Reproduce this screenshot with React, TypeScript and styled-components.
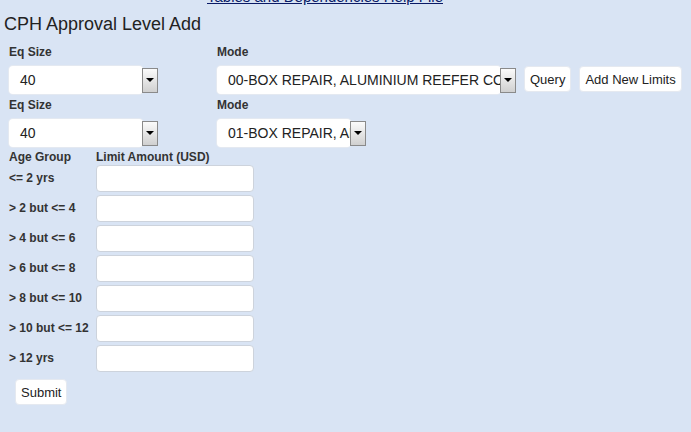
import React from 'react';
import styled, { createGlobalStyle } from 'styled-components';

const GlobalStyle = createGlobalStyle`
  html, body {
    margin: 0;
    padding: 0;
    background: #d9e4f4;
  }
  body {
    font-family: "Liberation Sans", Arial, sans-serif;
    color: #222;
  }
`;

const Page = styled.div`
  width: 691px;
  height: 432px;
  overflow: hidden;
  padding-left: 4px;
  box-sizing: border-box;
`;

const HelpLink = styled.a`
  display: block;
  margin: -12px 0 0 203px;
  font-size: 15px;
  line-height: 17px;
  color: #0a1a66;
  text-decoration: underline;
  width: max-content;
`;

const Title = styled.h1`
  margin: 8px 0 0;
  font-size: 18px;
  font-weight: normal;
  line-height: 22px;
  color: #222;
`;

const Fields = styled.div<{ $top: number }>`
  display: flex;
  align-items: flex-end;
  margin: ${({ $top }) => $top}px 0 0 5px;
  gap: 9px;
`;

const Field = styled.div<{ $width: number }>`
  display: flex;
  flex-direction: column;
  flex-shrink: 0;
  width: ${({ $width }) => $width}px;
  gap: 6px;
`;

const Label = styled.div`
  font-size: 12px;
  font-weight: bold;
  line-height: 16px;
  color: #333;
  white-space: nowrap;
`;

const SelectBox = styled.div<{ $width: number }>`
  width: ${({ $width }) => $width}px;
  height: 28px;
  display: flex;
  align-items: center;
`;

const SelectField = styled.div`
  flex: 1;
  min-width: 0;
  height: 28px;
  background: #fff;
  border-radius: 4px;
  box-shadow: 0 0 0 1px #e4e9f1;
  font-size: 14px;
  line-height: 28px;
  padding-left: 11px;
  padding-right: 3px;
  overflow: hidden;
  white-space: nowrap;
  color: #222;
`;

const Arrow = styled.div`
  flex-shrink: 0;
  width: 14px;
  height: 23px;
  border: 1px solid #8a8a8a;
  background: linear-gradient(#fbfbfb, #d0d0d0);
  display: flex;
  align-items: center;
  justify-content: center;
  margin-left: -1px;
  &::after {
    content: "";
    border-left: 4px solid transparent;
    border-right: 4px solid transparent;
    border-top: 4px solid #000;
  }
`;

const Button = styled.button`
  height: 26px;
  padding: 0 5px;
  border: 1px solid #e5e9f0;
  border-radius: 4px;
  background: #fff;
  font-family: "Liberation Sans", Arial, sans-serif;
  font-size: 13px;
  color: #222;
  white-space: nowrap;
  cursor: pointer;
`;

const Actions = styled.div`
  display: flex;
  flex-shrink: 0;
  gap: 8px;
  margin-left: -1px;
  padding-bottom: 2px;
`;

const HeaderLine = styled.div`
  display: flex;
  margin: 2px 0 0 5px;
  height: 15px;
  & > :first-child {
    width: 87px;
  }
`;

const Limits = styled.div`
  display: grid;
  grid-template-columns: 87px 158px;
  grid-auto-rows: 30px;
  margin: 1px 0 0 5px;
  align-items: start;
`;

const RowLabel = styled(Label)`
  line-height: 27px;
`;

const AmountInput = styled.input`
  width: 158px;
  height: 27px;
  box-sizing: border-box;
  border: 1px solid #cdd3dc;
  border-radius: 4px;
  background: #fff;
`;

const SubmitRow = styled.div`
  margin: 4px 0 0 11px;
`;

const rows = ['<= 2 yrs', '> 2 but <= 4', '> 4 but <= 6', '> 6 but <= 8', '> 8 but <= 10', '> 10 but <= 12', '> 12 yrs'];

function Select({ value, width }: { value: string; width: number }) {
  return (
    <SelectBox $width={width}>
      <SelectField>{value}</SelectField>
      <Arrow />
    </SelectBox>
  );
}

export default function App() {
  return (
    <Page>
      <GlobalStyle />
      <HelpLink href="#">Tables and Dependencies Help File</HelpLink>
      <Title>CPH Approval Level Add</Title>
      <Fields $top={9}>
        <Field $width={199}>
          <Label>Eq Size</Label>
          <Select value="40" width={149} />
        </Field>
        <Field $width={299}>
          <Label>Mode</Label>
          <Select value="00-BOX REPAIR, ALUMINIUM REEFER CONTAINER" width={299} />
        </Field>
        <Actions>
          <Button>Query</Button>
          <Button>Add New Limits</Button>
        </Actions>
      </Fields>
      <Fields $top={3}>
        <Field $width={199}>
          <Label>Eq Size</Label>
          <Select value="40" width={149} />
        </Field>
        <Field $width={149}>
          <Label>Mode</Label>
          <Select value="01-BOX REPAIR, ALUMINIUM" width={149} />
        </Field>
      </Fields>
      <HeaderLine>
        <Label>Age Group</Label>
        <Label>Limit Amount (USD)</Label>
      </HeaderLine>
      <Limits>
        {rows.map((r) => (
          <React.Fragment key={r}>
            <RowLabel>{r}</RowLabel>
            <AmountInput />
          </React.Fragment>
        ))}
      </Limits>
      <SubmitRow>
        <Button>Submit</Button>
      </SubmitRow>
    </Page>
  );
}
